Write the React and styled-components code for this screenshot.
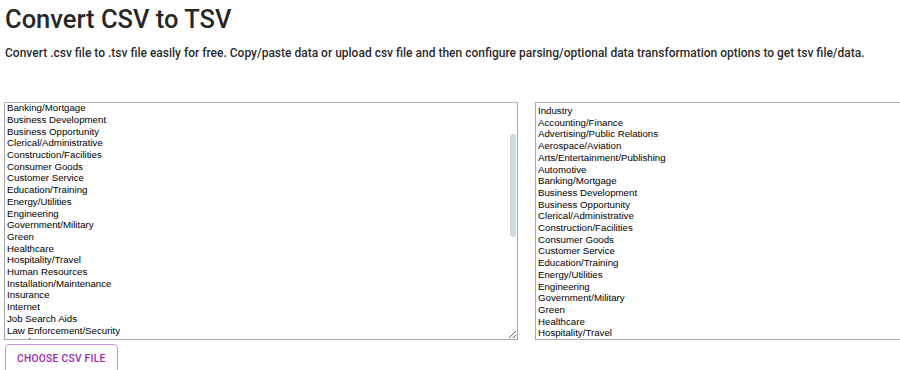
import React, { useLayoutEffect, useRef } from 'react'
import styled, { createGlobalStyle } from 'styled-components'

const categories = [
  'Industry',
  'Accounting/Finance',
  'Advertising/Public Relations',
  'Aerospace/Aviation',
  'Arts/Entertainment/Publishing',
  'Automotive',
  'Banking/Mortgage',
  'Business Development',
  'Business Opportunity',
  'Clerical/Administrative',
  'Construction/Facilities',
  'Consumer Goods',
  'Customer Service',
  'Education/Training',
  'Energy/Utilities',
  'Engineering',
  'Government/Military',
  'Green',
  'Healthcare',
  'Hospitality/Travel',
  'Human Resources',
  'Installation/Maintenance',
  'Insurance',
  'Internet',
  'Job Search Aids',
  'Law Enforcement/Security',
  'Legal',
  'Management/Executive',
  'Manufacturing/Operations',
  'Marketing',
  'Non-Profit/Volunteer',
  'Pharmaceutical/Biotech',
  'Professional Services',
  'QA/Quality Control',
  'Real Estate',
  'Restaurant/Food Service',
  'Retail',
  'Sales',
  'Science/Research',
  'Skilled Labor',
  'Technology',
  'Telecommunications',
  'Transportation/Logistics',
  'Other',
]

const data = categories.join('\n')

const GlobalStyle = createGlobalStyle`
  html, body {
    margin: 0;
    padding: 0;
    background: #fff;
    overflow: hidden;
  }
`

const Page = styled.main`
  width: 900px;
  height: 370px;
  overflow: hidden;
  font-family: Roboto, "Liberation Sans", sans-serif;
  color: rgba(0, 0, 0, 0.87);
`

const Title = styled.h1`
  margin: 0;
  padding: 3px 0 0 5px;
  font-size: 25.5px;
  font-weight: 500;
  line-height: 32px;
  white-space: nowrap;
`

const Intro = styled.p`
  margin: 10px 0 0 5px;
  font-size: 12px;
  font-weight: 500;
  line-height: 16px;
  white-space: nowrap;
`

const Panels = styled.section`
  display: grid;
  grid-template-columns: 514px 514px;
  column-gap: 17px;
  width: 1045px;
  margin: 41px 0 0 4px;
`

const Panel = styled.div`
  position: relative;
  height: 238px;
`

const DataBox = styled.textarea`
  box-sizing: border-box;
  display: block;
  width: 100%;
  height: 238px;
  margin: 0;
  padding: 2px 2px;
  border: 1px solid #a9a9a9;
  border-top-color: #b5b5b5;
  font-family: "Liberation Sans", Arial, sans-serif;
  font-size: 9.7px;
  line-height: 11.7px;
  color: #000;
  background: #fff;
  resize: both;
  outline: none;
  overflow: hidden;
`

/* drawn thumb: the headless browser hides native scrollbars */
const ScrollThumb = styled.div`
  position: absolute;
  top: 32px;
  right: 2px;
  width: 6px;
  height: 103px;
  border-radius: 3px;
  background: #cdd9e3;
  pointer-events: none;
`

const Actions = styled.div`
  display: flex;
  padding: 4px 0 0 5px;
`

const UploadButton = styled.button`
  box-sizing: border-box;
  height: 30px;
  padding: 0 11px;
  border: 1px solid rgba(156, 39, 176, 0.5);
  border-radius: 4px;
  background: transparent;
  color: #9c27b0;
  font-family: Roboto, "Liberation Sans", sans-serif;
  font-size: 10.2px;
  font-weight: 500;
  letter-spacing: 0.3px;
  text-transform: uppercase;
  line-height: 1;
  cursor: pointer;
`

export default function App() {
  const inputRef = useRef(null)

  useLayoutEffect(() => {
    if (inputRef.current) inputRef.current.scrollTop = 73
  }, [])

  return (
    <>
      <GlobalStyle />
      <Page>
        <Title>Convert CSV to TSV</Title>
        <Intro>
          Convert .csv file to .tsv file easily for free. Copy/paste data or upload csv file and then configure parsing/optional data transformation options to get tsv file/data.
        </Intro>
        <Panels>
          <Panel>
            <DataBox ref={inputRef} defaultValue={data} spellCheck={false} />
            <ScrollThumb />
          </Panel>
          <Panel>
            <DataBox readOnly value={data} spellCheck={false} />
          </Panel>
        </Panels>
        <Actions>
          <UploadButton type="button">Choose csv file</UploadButton>
        </Actions>
      </Page>
    </>
  )
}
